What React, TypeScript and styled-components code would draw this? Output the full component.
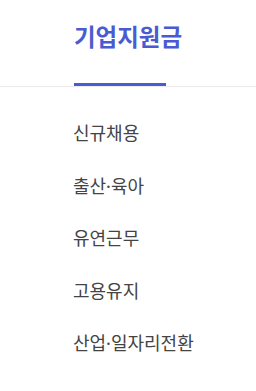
import React from 'react';
import styled, { createGlobalStyle } from 'styled-components';

const GlobalStyle = createGlobalStyle`
  html, body {
    margin: 0;
    padding: 0;
    background: #fff;
  }
  body {
    font-family: 'Noto Sans', 'Noto Sans CJK KR', sans-serif;
  }
  ul {
    margin: 0;
    padding: 0;
    list-style: none;
  }
`;

const menuItems = ['신규채용', '출산·육아', '유연근무', '고용유지', '산업·일자리전환'];

export default function App() {
  return (
    <>
      <GlobalStyle />
      <SideMenu>
        <MenuHeader>
          <MenuTitle>기업지원금</MenuTitle>
          <TitleBar />
        </MenuHeader>
        <MenuList>
          {menuItems.map(item => (
            <MenuItem key={item}>
              <MenuLink href="#">{item}</MenuLink>
            </MenuItem>
          ))}
        </MenuList>
      </SideMenu>
    </>
  );
}

const SideMenu = styled.nav`
  width: 256px;
  height: 391px;
  background: #fff;
`;

const MenuHeader = styled.div`
  display: flex;
  flex-direction: column;
  align-items: flex-start;
  padding: 22px 0 0 74px;
  border-bottom: 1px solid #ebebeb;
`;

const MenuTitle = styled.h2`
  margin: 0 0 31px;
  font-size: 23.5px;
  line-height: 30px;
  font-weight: 700;
  color: #4a5bd2;
`;

const TitleBar = styled.span`
  display: block;
  width: 92px;
  height: 3px;
  background: #4a5bd2;
`;

const MenuList = styled.ul`
  padding: 20px 0 0 73px !important;
`;

const MenuItem = styled.li`
  height: 52.5px;
  display: flex;
  align-items: center;
`;

const MenuLink = styled.a`
  font-size: 18px;
  line-height: 24px;
  color: #444;
  text-decoration: none;
`;
